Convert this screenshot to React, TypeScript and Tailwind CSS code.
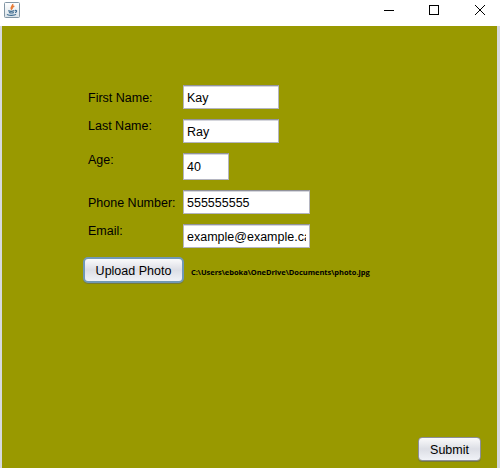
type FieldProps = {
  label: string;
  value: string;
  row: string;
  labelOffset: string;
  size: string;
};

const fields: FieldProps[] = [
  { label: "First Name:", value: "Kay", row: "h-[34px]", labelOffset: "pt-[5px]", size: "w-[96px] h-[24px] pt-[2px]" },
  { label: "Last Name:", value: "Ray", row: "h-[34px]", labelOffset: "-mt-px", size: "w-[96px] h-[24px] pt-[2px]" },
  { label: "Age:", value: "40", row: "h-[37px]", labelOffset: "-mt-px", size: "w-[46px] h-[27px]" },
  { label: "Phone Number:", value: "555555555", row: "h-[34px]", labelOffset: "pt-[5px]", size: "w-[127px] h-[24px] pt-[2px]" },
  { label: "Email:", value: "example@example.ca", row: "h-[33px]", labelOffset: "-mt-px", size: "w-[127px] h-[24px] pt-[2px]" },
];

function Field({ label, value, row, labelOffset, size }: FieldProps) {
  return (
    <div className={`flex items-start ${row}`}>
      <label className={`w-[95px] whitespace-nowrap leading-4 ${labelOffset}`}>{label}</label>
      <div
        className={`flex items-center border border-[#b4b5c0] border-t-[#92939c] bg-white px-[3px] shadow-[inset_0_1px_0_#d5d6dc] ${size}`}
      >
        <span className="block w-full overflow-hidden whitespace-nowrap leading-4">{value}</span>
      </div>
    </div>
  );
}

function JavaIcon() {
  return (
    <svg width="16" height="16" viewBox="0 0 16 16" fill="none">
      <defs>
        <linearGradient id="tile" x1="0" y1="0" x2="0" y2="1">
          <stop offset="0" stopColor="#ffffff" />
          <stop offset="1" stopColor="#d9e2e8" />
        </linearGradient>
      </defs>
      <rect x=".5" y=".5" width="15" height="15" rx="1" fill="url(#tile)" stroke="#8296a5" />
      <path d="M8.7 2C9.3 4 5.7 4.6 7.7 7.8M10.3 4C7.8 5.1 7.7 5.8 8.5 6.9" stroke="#e87a35" strokeWidth="1.4" />
      <path d="M4.3 8.6C5.6 9.3 8.8 9.2 10.3 8.6M5 10.5C6.5 11.1 8.8 11 9.9 10.5M3.4 12.1C2.8 13.6 10.5 13.7 12 12.4M10.9 8.6C13.3 7.8 13.2 10 11.1 10.8" stroke="#3f6c90" strokeWidth="1.2" />
    </svg>
  );
}

export default function App() {
  return (
    <div className="flex h-[468px] w-[500px] flex-col overflow-hidden bg-white font-['Liberation_Sans',Arial,sans-serif] text-[12.5px] text-black">
      <header className="flex h-[26px] shrink-0 items-start justify-between pl-1 pr-[14px] pt-[2px]">
        <JavaIcon />
        <svg width="102" height="16" viewBox="0 0 102 16" fill="none" stroke="#000" shapeRendering="crispEdges">
          <path d="M0 8.5h10" />
          <path d="M45.5 3.5h9v9h-9z" />
          <path d="M91 3l10 10M101 3L91 13" shapeRendering="auto" />
        </svg>
      </header>
      <main className="flex flex-1 flex-col border-l-2 border-r-[3px] border-l-[#d6d9df] border-r-[#d6d9df] bg-[#999900] pt-[59px]">
        <form className="flex flex-1 flex-col" onSubmit={(event) => event.preventDefault()}>
          <div className="pl-[86px]">
            {fields.map((field) => (
              <Field key={field.label} {...field} />
            ))}
          </div>
          <div className="flex items-center pl-[81px]">
            <button
              type="button"
              className="h-[26px] w-[101px] rounded-[5px] border-2 border-[#7198b5] bg-linear-to-b from-[#fafafb] via-[#dcdee5] to-[#f0f2f7] pt-px leading-4 shadow-[0_1px_0_#777b35]"
            >
              Upload Photo
            </button>
            <span className="ml-[7px] pt-[3px] font-['Open_Sans',sans-serif] text-[7.5px] font-bold leading-3 tracking-[-0.03px] whitespace-nowrap text-black">
              C:\Users\eboka\OneDrive\Documents\photo.jpg
            </span>
          </div>
          <div className="mt-auto flex justify-end pb-[7px] pr-4">
            <button
              type="submit"
              className="h-[24px] w-[63px] rounded-[4px] border border-[#8c8e99] bg-linear-to-b from-[#fafafb] via-[#dcdee5] to-[#f0f2f7] pt-[2px] leading-4 shadow-[0_1px_0_#777b35]"
            >
              Submit
            </button>
          </div>
        </form>
      </main>
    </div>
  );
}
